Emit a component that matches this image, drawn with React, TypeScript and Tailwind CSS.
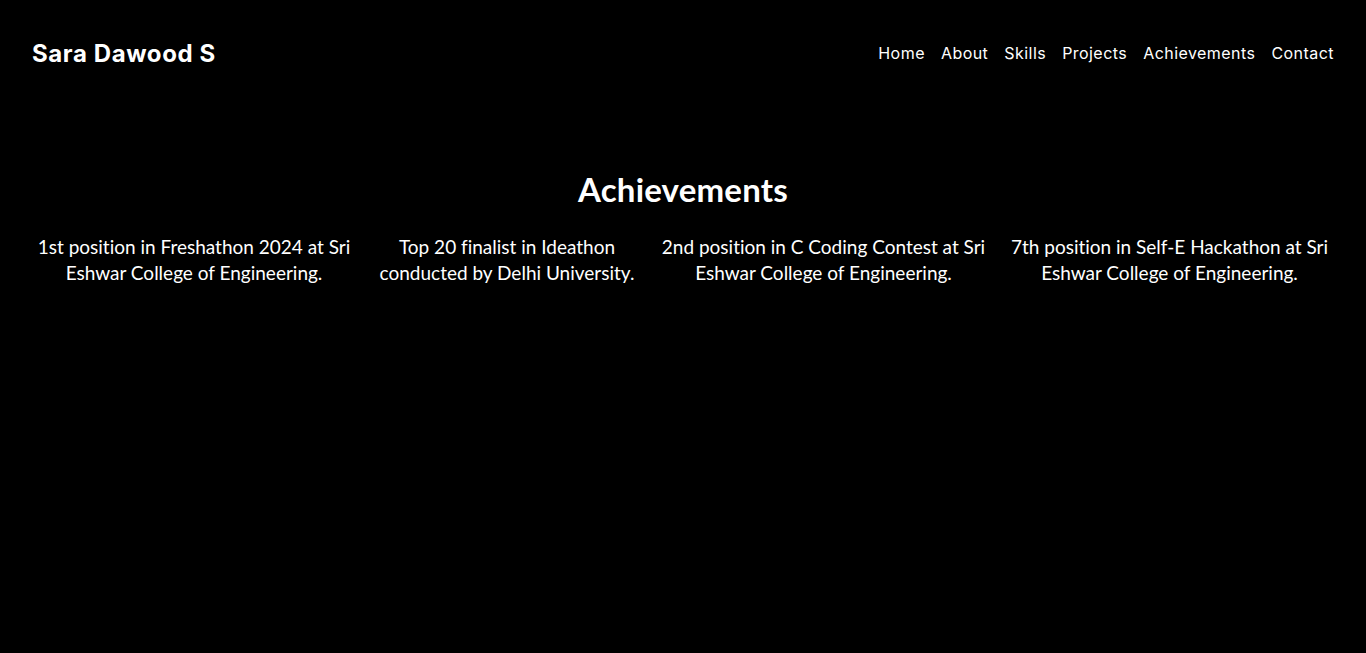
import React from "react";

const items: [string, string][] = [
  ["1st position in Freshathon 2024 at Sri", "Eshwar College of Engineering."],
  ["Top 20 finalist in Ideathon", "conducted by Delhi University."],
  ["2nd position in C Coding Contest at Sri", "Eshwar College of Engineering."],
  ["7th position in Self-E Hackathon at Sri", "Eshwar College of Engineering."],
];
const widths = ["w-[328px]", "w-[298px]", "w-[335px]", "w-[357px]"];

export default function App() {
  return (
    <div className="min-h-[653px] w-full bg-black text-white">
      <header className="flex h-[106px] items-center justify-between px-8" style={{ fontFamily: "Inter, 'Liberation Sans', sans-serif" }}>
        <div className="pt-[2px] text-[24px] font-bold leading-9 tracking-[0.6px]">Sara Dawood S</div>
        <nav className="flex gap-4 text-[16px] leading-6 tracking-[0.45px]">
          <span>Home</span>
          <span>About</span>
          <span>Skills</span>
          <span>Projects</span>
          <span>Achievements</span>
          <span>Contact</span>
        </nav>
      </header>
      <section className="pt-[63px] [font-variant-ligatures:none]" style={{ fontFamily: "Lato, 'Open Sans', sans-serif" }}>
        <h2 className="text-center text-[33px] font-bold leading-10 tracking-[0.2px]">Achievements</h2>
        <div className="mt-[25px] flex pl-[30px]">
          {items.map((it, i) => (
            <p key={i} className={`${widths[i]} shrink-0 whitespace-nowrap text-center text-[19px] leading-[26px]`}>
              {it[0]}
              <br />
              {it[1]}
            </p>
          ))}
        </div>
      </section>
    </div>
  );
}
